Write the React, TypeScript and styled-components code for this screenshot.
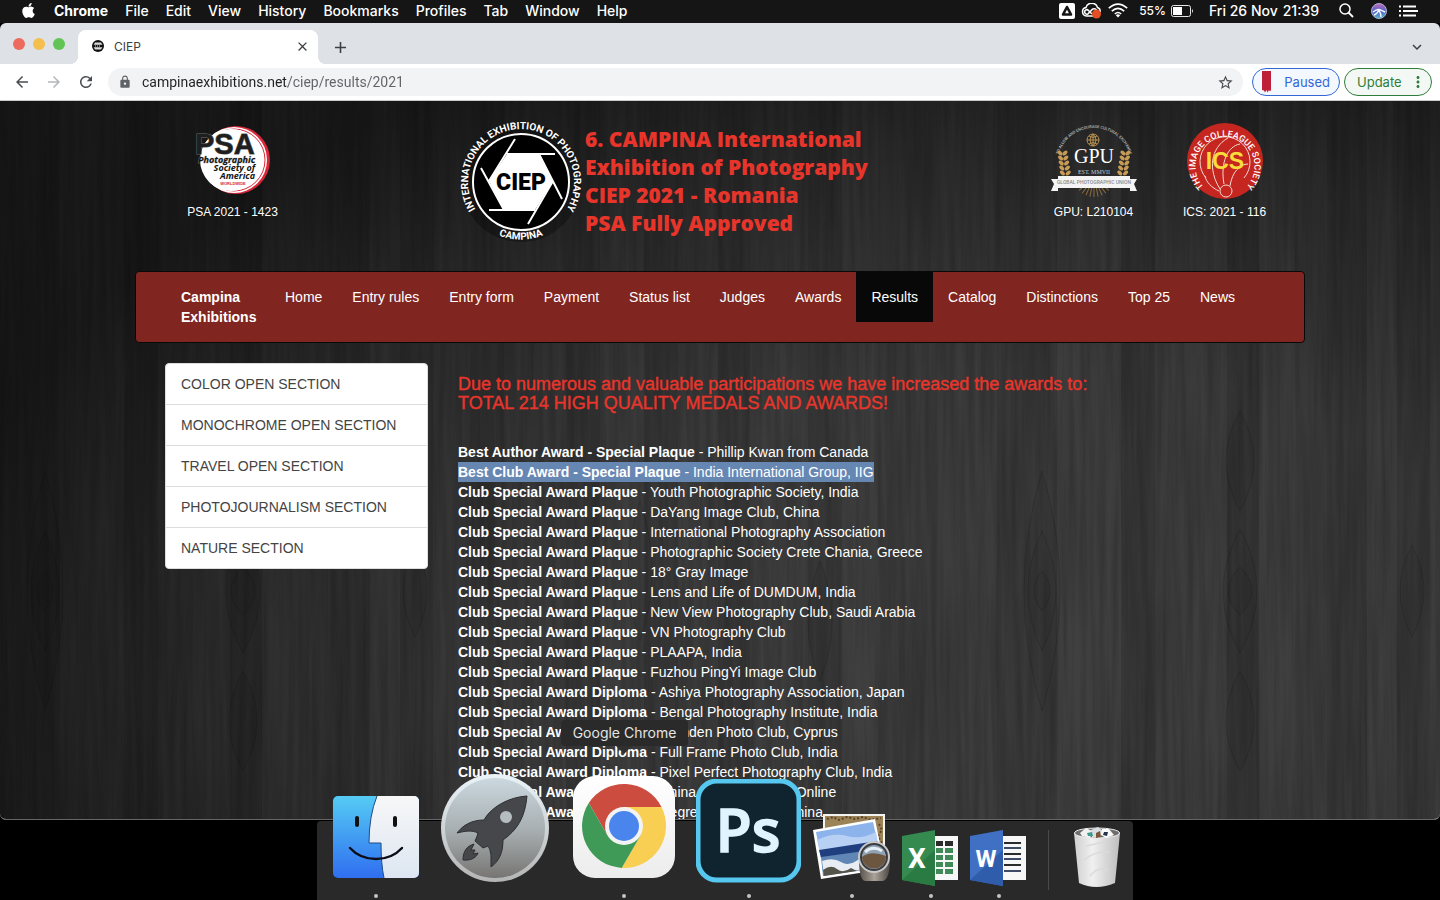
import React from "react";
import styled, { createGlobalStyle } from "styled-components";
import { FaApple } from "react-icons/fa";
import {
  MdArrowBack,
  MdArrowForward,
  MdRefresh,
  MdLock,
  MdStarBorder,
  MdMoreVert,
  MdClose,
  MdAdd,
  MdExpandMore,
} from "react-icons/md";

const GlobalStyle = createGlobalStyle`
  * { box-sizing: border-box; }
  body { margin: 0; background: #000; }
  button, input { font: inherit; }
`;

const uiFont = `Inter, Roboto, sans-serif`;
const siteFont = `"Helvetica Neue", "Liberation Sans", Arial, sans-serif`;
const badgeFont = `Roboto, "Liberation Sans", sans-serif`;

/* ---------- desktop and menu bar ---------- */

const Desktop = styled.div`
  position: relative;
  display: flex;
  flex-direction: column;
  height: 100vh;
  padding-bottom: 80px;
  overflow: hidden;
  background: #000;
  font-family: ${uiFont};
`;

const MenuBar = styled.header`
  display: flex;
  justify-content: space-between;
  align-items: center;
  flex: none;
  height: 23px;
  padding: 0 22px 2px 20px;
  background: #151515;
  color: #fff;
`;

const Menus = styled.nav`
  display: flex;
  align-items: center;
  gap: 17px;
`;

const MenuButton = styled.button<{ $bold?: boolean }>`
  display: flex;
  padding: 0;
  border: 0;
  background: none;
  color: #fff;
  font-size: 14px;
  line-height: 22px;
  font-weight: ${(p) => (p.$bold ? 700 : 500)};
  white-space: nowrap;
`;

const StatusArea = styled.div`
  display: flex;
  align-items: center;
`;

const StatusButton = styled(MenuButton)<{ $gap: number; $small?: boolean }>`
  align-items: center;
  gap: 5px;
  margin-left: ${(p) => p.$gap}px;
  font-size: ${(p) => (p.$small ? 12 : 14)}px;
`;

/* ---------- browser window ---------- */

const BrowserWindow = styled.main`
  display: flex;
  flex-direction: column;
  flex: 1;
  min-height: 0;
  overflow: hidden;
  border-bottom: 1px solid #666;
  border-radius: 6px;
  background: #dee1e6;
`;

const TabStrip = styled.div`
  display: flex;
  align-items: flex-end;
  flex: none;
  height: 41px;
  padding: 0 14px 0 13px;
`;

const WindowControls = styled.div`
  display: flex;
  gap: 8px;
  align-self: center;
  margin-right: 13px;
`;

const Light = styled.button<{ $color: string }>`
  width: 12px;
  height: 12px;
  padding: 0;
  border: 0;
  border-radius: 50%;
  background: ${(p) => p.$color};
`;

const Tab = styled.div`
  position: relative;
  display: flex;
  align-items: center;
  width: 240px;
  height: 34px;
  padding: 0 8px 2px 13px;
  border-radius: 8px 8px 0 0;
  background: #fff;
  color: #3c4043;
  font-size: 12px;

  &::before,
  &::after {
    content: "";
    position: absolute;
    bottom: 0;
    width: 8px;
    height: 8px;
  }
  &::before {
    left: -8px;
    background: radial-gradient(circle at 0 0, transparent 8px, #fff 8px);
  }
  &::after {
    right: -8px;
    background: radial-gradient(circle at 100% 0, transparent 8px, #fff 8px);
  }
`;

const TabTitle = styled.span`
  flex: 1;
  margin-left: 9px;
`;

const IconButton = styled.button<{ $tone?: string }>`
  display: flex;
  align-items: center;
  justify-content: center;
  padding: 0;
  border: 0;
  background: none;
  color: ${(p) => p.$tone || "#3c4043"};
`;

const NewTab = styled(IconButton)`
  height: 34px;
  margin-left: 13px;
`;

const TabSearch = styled(IconButton)`
  height: 34px;
  margin-left: auto;
`;

const Toolbar = styled.div`
  display: flex;
  align-items: center;
  flex: none;
  height: 37px;
  padding: 0 8px 0 13px;
  border-bottom: 1px solid #c9cbcd;
  background: #fff;
`;

const NavButtons = styled.div`
  display: flex;
  gap: 14px;
  margin-right: 13px;
`;

const Omnibox = styled.div`
  display: flex;
  align-items: center;
  flex: 1;
  height: 28px;
  margin-right: 9px;
  padding: 0 9px 0 10px;
  border-radius: 14px;
  background: #f1f3f4;
  color: #5f6368;
`;

const Address = styled.input`
  flex: 1;
  min-width: 0;
  margin-left: 10px;
  padding: 0;
  border: 0;
  outline: 0;
  color: #202124;
  font-family: Roboto, sans-serif;
  font-size: 14px;
  line-height: 20px;
  background: linear-gradient(90deg, #202124 146px, #5f6368 146px);
  background-clip: text;
  -webkit-background-clip: text;
  -webkit-text-fill-color: transparent;
`;

const Pill = styled.button<{ $color: string; $fill: string }>`
  display: flex;
  align-items: center;
  justify-content: space-between;
  width: 88px;
  height: 28px;
  margin-right: 4px;
  padding: 0 9px;
  border: 1px solid ${(p) => p.$color};
  border-radius: 14px;
  background: ${(p) => p.$fill};
  color: ${(p) => p.$color};
  font-size: 13px;
  &:last-child {
    margin-right: 0;
    padding: 0 4px 0 12px;
  }
`;

/* ---------- web page ---------- */

const Page = styled.div`
  position: relative;
  flex: 1;
  min-height: 0;
  overflow: hidden;
  background: radial-gradient(ellipse 77% 96% at 72% 80%, #404040 0%, #3d3d3d 45%, #2c2c2c 75%, #1a1a1a 100%);
  color: #fff;
  font-family: ${siteFont};
  font-size: 14px;
  line-height: 20px;
`;

const WoodLayer = styled.svg`
  position: absolute;
  inset: 0;
  width: 100%;
  height: 100%;
`;

const Container = styled.div`
  position: relative;
  max-width: 1170px;
  margin: 0 auto;
`;

const Banner = styled.div`
  display: grid;
  grid-template-columns: 195px 1fr 131px 131px;
  height: 170px;
  padding: 20px 15px 0 0;
`;

const Sponsor = styled.figure`
  display: flex;
  flex-direction: column;
  align-items: center;
  margin: 0;
  font-size: 12px;
  svg {
    overflow: visible;
  }
`;

const SponsorCaption = styled.figcaption`
  white-space: nowrap;
`;

const TitleBlock = styled.div`
  display: flex;
  padding-left: 131px;
  svg {
    flex: none;
    overflow: visible;
  }
`;

const SiteTitle = styled.h1`
  margin: 4px 0 0 4px;
  color: #e8352b;
  font-family: "Open Sans", sans-serif;
  font-weight: 800;
  font-size: 21px;
  line-height: 28px;
  white-space: nowrap;
`;

const SiteNav = styled.nav`
  display: flex;
  align-items: flex-start;
  min-height: 72px;
  padding: 0 30px;
  border: 1px solid #090909;
  border-radius: 4px;
  background: #802520;
`;

const Brand = styled.a`
  width: 104px;
  padding: 15px 15px 0;
  color: #fff;
  font-weight: 700;
  text-decoration: none;
`;

const NavItem = styled.a<{ $active?: boolean }>`
  padding: 15px;
  background: ${(p) => (p.$active ? "#080808" : "none")};
  color: #fff;
  text-decoration: none;
  white-space: nowrap;
`;

const Columns = styled.div`
  display: flex;
  align-items: flex-start;
  gap: 30px;
  padding: 20px 30px 0;
`;

const SectionList = styled.nav`
  flex: none;
  width: 263px;
  overflow: hidden;
  border: 1px solid #ddd;
  border-radius: 4px;
  background: #fff;
`;

const SectionLink = styled.a`
  display: block;
  padding: 10px 15px;
  color: #444;
  text-decoration: none;
  & + & {
    border-top: 1px solid #ddd;
  }
`;

const Results = styled.section`
  flex: 1;
  white-space: nowrap;
`;

const Notice = styled.h2`
  margin: 12px 0 29px;
  color: #e8352b;
  font-size: 18px;
  font-weight: 400;
  line-height: 19px;
  -webkit-text-stroke: 0.4px #e8352b;
`;

const AwardList = styled.ul`
  margin: 0;
  padding: 0;
  list-style: none;
`;

const AwardText = styled.span<{ $selected?: boolean }>`
  display: inline-block;
  background: ${(p) => (p.$selected ? "#6787b3" : "none")};
`;

/* ---------- dock ---------- */

const DockLayer = styled.div`
  position: absolute;
  left: 0;
  right: 0;
  bottom: 0;
  display: flex;
  justify-content: center;
  padding-left: 10px;
`;

const Dock = styled.nav`
  display: flex;
  align-items: flex-end;
  height: 79px;
  border-radius: 4px 4px 0 0;
  background: #292929;
`;

const DockItem = styled.button<{ $width: number }>`
  position: relative;
  display: flex;
  flex-direction: column;
  align-items: center;
  flex: none;
  gap: 4px;
  width: ${(p) => p.$width}px;
  padding: 0 0 2px;
  border: 0;
  background: none;
  svg {
    display: block;
  }
`;

const RunningDot = styled.span<{ $on: boolean }>`
  width: 4px;
  height: 4px;
  border-radius: 50%;
  background: ${(p) => (p.$on ? "#c4c4c4" : "transparent")};
`;

const Divider = styled.span`
  width: 1px;
  height: 60px;
  margin: 0 12px 10px 13px;
  background: #4a4a4a;
`;

const DockLabel = styled.span`
  position: absolute;
  left: 6px;
  bottom: 154px;
  width: 127px;
  border-radius: 4px;
  background: #2a2a2a;
  color: #e4e4e4;
  font-family: ${uiFont};
  font-size: 14px;
  line-height: 26px;
  text-align: center;
  white-space: nowrap;
  &::after {
    content: "";
    position: absolute;
    top: 26px;
    left: 55px;
    border: 8px solid transparent;
    border-top-color: #303030;
    border-bottom: 0;
  }
`;

/* ---------- drawings ---------- */

const PLANKS = [
  [0, 60, 0.1], [60, 64, 0], [124, 34, 0.14], [158, 38, 0.04], [196, 34, 0.02], [230, 32, 0.16],
  [262, 36, 0], [298, 32, 0.05], [330, 40, 0.12], [370, 30, 0], [400, 33, 0.12], [433, 37, 0.02],
  [470, 34, 0.1], [504, 62, 0.04], [566, 34, 0.12], [600, 44, 0], [644, 34, 0.1], [678, 40, 0.03],
  [718, 32, 0.12], [750, 58, 0.02], [808, 34, 0.1], [842, 36, 0], [878, 59, 0.06], [937, 60, 0.03],
];

const KNOTS = [
  [45, 490, 8, 20], [45, 490, 14, 60], [45, 490, 18, 120],
  [243, 490, 12, 24], [243, 490, 17, 62], [243, 360, 14, 50], [243, 620, 14, 50],
  [415, 490, 12, 46], [640, 470, 12, 70], [820, 520, 12, 60],
];

const Wood = () => (
  <WoodLayer aria-hidden="true">
    <defs>
      <filter id="grain" x="0" y="0" width="100%" height="100%">
        <feTurbulence type="fractalNoise" baseFrequency="0.16 0.006" numOctaves="3" seed="7" />
        <feColorMatrix values="0 0 0 0 0  0 0 0 0 0  0 0 0 0 0  0.45 0 0 0 -0.13" />
      </filter>
      <pattern id="planks" width="997" height="1000" patternUnits="userSpaceOnUse">
        {PLANKS.map(([x, w, o]) => (
          <rect key={x} x={x} width={w} height="1000" fill="#000" opacity={o} />
        ))}
        {KNOTS.map(([x, y, rx, ry], i) => (
          <path
            key={i}
            d={`M${x} ${y - ry}Q${x + rx * 2} ${y} ${x} ${y + ry}Q${x - rx * 2} ${y} ${x} ${y - ry}Z`}
            fill="#000"
            fillOpacity="0.04"
            stroke="#000"
            strokeOpacity="0.14"
          />
        ))}
      </pattern>
    </defs>
    <rect width="100%" height="100%" fill="url(#planks)" />
    <rect width="100%" height="100%" filter="url(#grain)" opacity="0.7" />
  </WoodLayer>
);

const PsaLogo = () => (
  <svg width="78" height="81" viewBox="0 -4 78 81">
    <circle cx="42" cy="35" r="34" fill="#d8283a" />
    <circle cx="40" cy="35" r="33" fill="#fff" />
    <circle cx="40" cy="35" r="31" fill="none" stroke="#d8283a" strokeWidth="1" />
    <circle cx="37" cy="35" r="31" fill="#fff" />
    <text x="1" y="29" fontFamily={siteFont} fontWeight="700" fontSize="29" fill="#1f1f1f" stroke="#6a6a6a" strokeWidth="1" paintOrder="stroke">PSA</text>
    <g fontFamily="Open Sans, sans-serif" fontWeight="700" fontStyle="italic" fontSize="9" fill="#151515" textAnchor="end">
      <text x="61" y="38" stroke="#aaa" strokeWidth="0.6" paintOrder="stroke">Photographic</text>
      <text x="61" y="46">Society of</text>
      <text x="61" y="54">America</text>
    </g>
    <text x="39" y="60" fontFamily={siteFont} fontWeight="700" fontSize="4" fill="#d8283a" textAnchor="middle">WORLDWIDE</text>
  </svg>
);

const CiepLogo = () => (
  <svg width="120" height="122" viewBox="0 0 120 122">
    <defs>
      <path id="ciepTop" d="M 22.5 98.5 A 53 53 0 1 1 97.5 98.5" />
      <path id="ciepBottom" d="M 20 103 A 59 59 0 0 0 100 103" />
    </defs>
    <circle cx="60" cy="61" r="60" fill="#000" opacity="0.3" />
    <circle cx="60" cy="61" r="48" fill="#000" stroke="#fff" strokeWidth="2" />
    <path d="M46 33H78L92 60L74 89H43L28 60Z" fill="#fff" />
    <path d="M28 60L54 18M46 33H94M78 33L101 78M92 60L67 103M74 89H28M43 89L20 47" stroke="#fff" strokeWidth="2" />
    <text x="60" y="69" fontFamily={badgeFont} fontWeight="900" fontSize="23" textAnchor="middle" fill="#000">CIEP</text>
    <g fontFamily={badgeFont} fontWeight="700" fontSize="10" fill="#fff" textAnchor="middle">
      <text>
        <textPath href="#ciepTop" startOffset="50%">INTERNATIONAL EXHIBITION OF PHOTOGRAPHY</textPath>
      </text>
      <text>
        <textPath href="#ciepBottom" startOffset="50%">CAMPINA</textPath>
      </text>
    </g>
  </svg>
);

const EARS = [0, 1, 2, 3, 4];
const RAYS = [-60, -48, -36, -24, -12, 0, 12, 24, 36, 48, 60];

const GpuLogo = () => (
  <svg width="86" height="81" viewBox="0 -2 86 81">
    <defs>
      <path id="gpuArc" d="M 6 42 A 37 37 0 0 1 80 42" />
    </defs>
    <text fontFamily={badgeFont} fontSize="4" fontWeight="500" fill="#bbb" textAnchor="middle">
      <textPath href="#gpuArc" startOffset="50%">TO ALLOW AND ENCOURAGE CULTURAL EXCHANGE</textPath>
    </text>
    <g fill="none" stroke="#b8924f" strokeWidth="1">
      <circle cx="42" cy="17" r="6" />
      <path d="M36 17H48M42 11V23M38 13Q42 16 46 13M38 21Q42 18 46 21M42 11Q36 17 42 23Q48 17 42 11" />
    </g>
    <text x="43" y="40" fontFamily="Liberation Serif, serif" fontSize="20" fill="#fff" textAnchor="middle">GPU</text>
    <text x="43" y="51" fontFamily="Liberation Serif, serif" fontSize="6" fill="#c8c8c8" textAnchor="middle">EST. MMVII</text>
    {EARS.map((i) => (
      <g key={i} fill="#c79a55">
        <ellipse cx={9 + i * 0.6} cy={30 + i * 5} rx="3" ry="1.8" transform={`rotate(40 ${9 + i * 0.6} ${30 + i * 5})`} />
        <ellipse cx={14 + i * 0.8} cy={30 + i * 5} rx="3" ry="1.8" transform={`rotate(-40 ${14 + i * 0.8} ${30 + i * 5})`} />
        <ellipse cx={77 - i * 0.6} cy={30 + i * 5} rx="3" ry="1.8" transform={`rotate(-40 ${77 - i * 0.6} ${30 + i * 5})`} />
        <ellipse cx={72 - i * 0.8} cy={30 + i * 5} rx="3" ry="1.8" transform={`rotate(40 ${72 - i * 0.8} ${30 + i * 5})`} />
      </g>
    ))}
    {RAYS.map((a) => (
      <path key={a} d="M43 64V74" stroke="#8b6d3c" strokeWidth="1" transform={`rotate(${a} 43 54)`} />
    ))}
    <path d="M0 56H7V53H79V56H86L83 61L86 68H79V65H7V68H0L3 61Z" fill="#f4f4f4" />
    <text x="43" y="61" fontFamily={badgeFont} fontSize="5" fontWeight="500" fill="#8a8a8a" textAnchor="middle">GLOBAL PHOTOGRAPHIC UNION</text>
  </svg>
);

const IcsLogo = () => (
  <svg width="78" height="81" viewBox="0 -1 78 81">
    <defs>
      <path id="icsArc" d="M 17.5 64.5 A 29.5 29.5 0 1 1 60.5 64.5" />
    </defs>
    <circle cx="39" cy="39" r="38" fill="#c5261f" />
    <g fill="none" stroke="#f6d9d4" strokeWidth="1">
      <path d="M20 56A25 25 0 1 1 58 56" />
      <path d="M34 67C22 48 24 26 42 16M38 62C34 40 42 24 54 22M44 64C46 50 54 42 62 42M33 69C26 66 20 60 19 54" />
      <circle cx="40" cy="69" r="6" />
    </g>
    <text fontFamily={badgeFont} fontSize="9" fontWeight="500" fill="#fff" textAnchor="middle">
      <textPath href="#icsArc" startOffset="50%">THE IMAGE COLLEAGUE SOCIETY</textPath>
    </text>
    <text x="39" y="47" fontFamily={siteFont} fontSize="23" fontWeight="700" fill="#f8dc3c" textAnchor="middle">ICS</text>
  </svg>
);

const FinderIcon = () => (
  <svg width="86" height="94" viewBox="0 0 86 94">
    <defs>
      <linearGradient id="finderBlue" x1="0" y1="0" x2="0" y2="1">
        <stop offset="0" stopColor="#55cbf4" />
        <stop offset="1" stopColor="#2f6ef0" />
      </linearGradient>
      <linearGradient id="finderWhite" x1="0" y1="0" x2="0" y2="1">
        <stop offset="0" stopColor="#f7f7f8" />
        <stop offset="1" stopColor="#dde6f1" />
      </linearGradient>
    </defs>
    <rect width="86" height="82" rx="5" fill="url(#finderBlue)" />
    <path d="M44 0H81A5 5 0 0 1 86 5V77A5 5 0 0 1 81 82H51Q48 68 48 47H36Q36 20 44 0Z" fill="url(#finderWhite)" />
    <path d="M44 0Q36 20 36 47H48Q48 68 51 82" fill="none" stroke="#1f4d86" strokeWidth="1" />
    <path d="M24 22V29M62 22V29" stroke="#111" strokeWidth="4" strokeLinecap="round" />
    <path d="M17 52Q27 63 43 63T69 52" fill="none" stroke="#0c0c14" strokeWidth="2.4" strokeLinecap="round" />
  </svg>
);

const LaunchpadIcon = () => (
  <svg width="108" height="116" viewBox="0 0 108 116">
    <defs>
      <linearGradient id="padRim" x1="0" y1="0" x2="0" y2="1">
        <stop offset="0" stopColor="#eaf4f8" />
        <stop offset="1" stopColor="#b4b4b4" />
      </linearGradient>
      <linearGradient id="padFace" x1="0" y1="0" x2="0" y2="1">
        <stop offset="0" stopColor="#cbd8df" />
        <stop offset="0.55" stopColor="#a5acae" />
        <stop offset="1" stopColor="#777573" />
      </linearGradient>
    </defs>
    <circle cx="54" cy="54" r="54" fill="url(#padRim)" />
    <circle cx="54" cy="54" r="50" fill="url(#padFace)" />
    <g fill="#45474a" stroke="#2d2f31" strokeWidth="1">
      <path d="M86 22C68 23 50 33 43 46C31 46 22 51 16 59C24 57 31 56 37 59Q36 63 34 67L42 74L47 72Q49 74 50 81L50 93C58 87 62 79 62 66C76 56 84 44 86 22Z" />
      <path d="M33 70C26 72 22 77 22 86C30 87 36 83 37 79L32 80L34 76L30 76Z" />
    </g>
    <circle cx="65" cy="43" r="6" fill="#b6bdc0" />
  </svg>
);

const ChromeIcon = () => (
  <svg width="102" height="114" viewBox="0 0 102 114">
    <defs>
      <linearGradient id="chromeTile" x1="0" y1="0" x2="0" y2="1">
        <stop offset="0" stopColor="#fff" />
        <stop offset="1" stopColor="#ececec" />
      </linearGradient>
    </defs>
    <rect width="102" height="102" rx="22" fill="url(#chromeTile)" />
    <path d="M15.8 27.1A42 42 0 0 1 88.5 31H51L34.5 59.5Z" fill="#cc4d40" />
    <path d="M88.5 31A42 42 0 0 1 48.7 91.9L67.5 59.5L51 31Z" fill="#f8cf52" />
    <path d="M48.7 91.9A42 42 0 0 1 15.8 27.1L34.5 59.5L67.5 59.5Z" fill="#3f9a57" />
    <circle cx="51" cy="50" r="19" fill="#f3f3f3" />
    <circle cx="51" cy="50" r="15" fill="#4a85ee" />
  </svg>
);

const PhotoshopIcon = () => (
  <svg width="105" height="111" viewBox="0 0 105 111">
    <rect x="2" y="2" width="101" height="99" rx="19" fill="#10242f" stroke="#56c8ef" strokeWidth="5" />
    <text x="52" y="73" fontFamily="Open Sans, sans-serif" fontWeight="600" fontSize="59" fill="#dff4ff" stroke="#dff4ff" strokeWidth="1.5" textAnchor="middle">Ps</text>
  </svg>
);

const PreviewIcon = () => (
  <svg width="77" height="76" viewBox="0 0 77 76">
    <defs>
      <linearGradient id="loupe" x1="0" y1="0" x2="1" y2="0">
        <stop offset="0" stopColor="#55504a" />
        <stop offset="0.5" stopColor="#aaa299" />
        <stop offset="1" stopColor="#4a4642" />
      </linearGradient>
    </defs>
    <rect x="10" y="0" width="62" height="54" fill="#f4f2ee" />
    <rect x="12" y="2" width="58" height="50" fill="#9c8257" />
    <path d="M14 5L20 3L26 6L34 3L42 5L50 3L58 6L68 4M66 10L69 16L65 22L69 30L66 38" stroke="#5b4526" strokeWidth="2" strokeDasharray="2 2" fill="none" />
    <path d="M0 16L62 5L72 55L8 65Z" fill="#fff" />
    <path d="M3 18L60 8L65 30L7 39Z" fill="#8db3ec" />
    <path d="M4 26Q20 18 34 22T63 18L65 29L7 38Z" fill="#b8d0f3" />
    <path d="M6 36L64 27L66 36L8 44Z" fill="#1f3f7e" />
    <path d="M8 43L66 35L69 53L10 62Z" fill="#5f86b5" />
    <path d="M9 47Q20 43 28 48T46 45L52 55L11 61Z" fill="#e7edf2" />
    <path d="M10 56Q18 50 24 55T38 54L44 57L11 62Z" fill="#55544a" />
    <path d="M46 44Q46 66 52 67H70Q77 65 77 44Z" fill="url(#loupe)" />
    <circle cx="61" cy="43" r="15" fill="#3a3c40" stroke="#c9c9c9" strokeWidth="2" />
    <circle cx="61" cy="43" r="12" fill="#8fa3b4" />
    <path d="M49 43Q58 36 73 42A12 12 0 0 1 49 43Z" fill="#6d5640" />
    <path d="M52 38Q60 31 69 37" stroke="#e6eef5" strokeWidth="3" fill="none" />
  </svg>
);

const SHEET_ROWS = [11, 18, 25, 32, 39];

const ExcelIcon = () => (
  <svg width="57" height="60" viewBox="0 0 57 60">
    <rect x="30" y="6" width="26" height="44" fill="#f7f7f7" />
    {SHEET_ROWS.map((y, i) => (
      <path key={y} d={`M34 ${y + 2.5}H41M43 ${y + 2.5}H51`} stroke={i === 0 ? "#2b2b2b" : "#3f8a58"} strokeWidth="5" />
    ))}
    <path d="M0 6L33 0V56L0 50Z" fill="#358a4f" />
    <path d="M0 50L33 20V56Z" fill="#2a7a43" />
    <text x="15" y="38" fontFamily={badgeFont} fontWeight="700" fontSize="28" fill="#fff" textAnchor="middle">X</text>
  </svg>
);

const WORD_ROWS = [12, 17, 23, 28, 34, 40];

const WordIcon = () => (
  <svg width="57" height="60" viewBox="0 0 57 60">
    <rect x="30" y="6" width="26" height="44" fill="#f7f7f7" />
    {WORD_ROWS.map((y, i) => (
      <path key={y} d={`M34 ${y + 1}H51`} stroke={i % 2 ? "#3d4a68" : "#2b2b2b"} strokeWidth="2" />
    ))}
    <path d="M0 6L33 0V56L0 50Z" fill="#3f70c4" />
    <path d="M0 50L33 20V56Z" fill="#2f5cab" />
    <text x="16" y="37" fontFamily={badgeFont} fontWeight="700" fontSize="24" fill="#fff" textAnchor="middle">W</text>
  </svg>
);

const TrashIcon = () => (
  <svg width="46" height="64" viewBox="0 0 46 64">
    <defs>
      <linearGradient id="bin" x1="0" y1="0" x2="1" y2="0">
        <stop offset="0" stopColor="#cfcfcf" />
        <stop offset="0.4" stopColor="#f0f0f0" />
        <stop offset="1" stopColor="#bdbdbd" />
      </linearGradient>
    </defs>
    <path d="M0 7L5 57Q22 65 41 57L46 7Z" fill="url(#bin)" />
    <ellipse cx="23" cy="7" rx="22.5" ry="5" fill="#6d6d6d" stroke="#eee" strokeWidth="1" />
    <path d="M6 7L12 2L18 5L16 12L8 10Z" fill="#f1f1f1" />
    <path d="M17 4L24 1L30 6L25 12L18 11Z" fill="#d9dee3" />
    <path d="M28 3L35 3L40 9L32 12L27 9Z" fill="#fafafa" />
    <path d="M13 7L18 6L19 10L14 10Z" fill="#3f9a8c" />
    <path d="M22 7L26 5L27 11L22 12Z" fill="#7c5638" />
    <path d="M30 6L34 6L33 10L29 9Z" fill="#27324d" />
    <path d="M12 20L30 16M10 34Q22 24 36 26M16 50Q24 40 34 44" stroke="#dadada" strokeWidth="1.5" fill="none" />
  </svg>
);

const Favicon = () => (
  <svg width="14" height="14" viewBox="0 0 14 14">
    <circle cx="7" cy="7" r="6" fill="#111" />
    <path d="M4 3.5H10L12 7L10 10.5H4L2 7Z" fill="#ddd" />
    <path d="M2 7H12" stroke="#111" strokeWidth="2.5" />
    <path d="M4 7H10" stroke="#ddd" strokeWidth="1" strokeDasharray="1 1" />
  </svg>
);

const UploadBadge = () => (
  <svg width="16" height="16" viewBox="0 0 16 16">
    <rect width="16" height="16" rx="2" fill="#fff" />
    <path d="M8 4L12 11.5H4Z" fill="none" stroke="#151515" strokeWidth="2.6" strokeLinejoin="round" />
  </svg>
);

const CloudBadge = () => (
  <svg width="21" height="16" viewBox="0 0 21 16">
    <g fill="none" stroke="#fff" strokeWidth="1.5">
      <path d="M12 13H5.5A4.3 4.3 0 0 1 5 4.5A6 6 0 0 1 16.5 4.5A4 4 0 0 1 19 9" />
      <path d="M11 11L7.5 7.5A2.2 2.2 0 1 0 7 10.8L11.5 6.2A3 3 0 0 1 16 8" />
    </g>
    <circle cx="15.5" cy="11" r="4.5" fill="#e24f22" />
  </svg>
);

const WifiGlyph = () => (
  <svg width="20" height="15" viewBox="0 0 20 15">
    <g fill="none" stroke="#fff" strokeWidth="1.6">
      <path d="M0.8 5.2Q10 -3 19.2 5.2" />
      <path d="M3.8 8.2Q10 2.6 16.2 8.2" />
      <path d="M6.8 11Q10 8 13.2 11" />
    </g>
    <path d="M10 14.5L7.8 12.2Q10 10.5 12.2 12.2Z" fill="#fff" />
  </svg>
);

const BatteryGlyph = () => (
  <svg width="23" height="12" viewBox="0 0 23 12">
    <rect x="0.5" y="0.5" width="19" height="11" rx="2" fill="none" stroke="#e6e6e6" />
    <rect x="2" y="2" width="9" height="8" fill="#fff" />
    <path d="M21 4Q23 6 21 8Z" fill="#e6e6e6" />
  </svg>
);

const SearchGlyph = () => (
  <svg width="15" height="15" viewBox="0 0 15 15">
    <circle cx="6" cy="6" r="5" fill="none" stroke="#fff" strokeWidth="1.5" />
    <path d="M9.5 9.5L14 14" stroke="#fff" strokeWidth="1.8" />
  </svg>
);

const AssistantGlyph = () => (
  <svg width="16" height="16" viewBox="0 0 16 16">
    <defs>
      <linearGradient id="orb" x1="0" y1="0" x2="0" y2="1">
        <stop offset="0" stopColor="#c46ab8" />
        <stop offset="0.5" stopColor="#5661c9" />
        <stop offset="1" stopColor="#4fb3c9" />
      </linearGradient>
    </defs>
    <circle cx="8" cy="8" r="7.5" fill="url(#orb)" stroke="#aab3d8" />
    <path d="M2 9Q6 6 8 6.5T14 9M8 7Q6 11 3 12M8 7Q10 11 10 14" fill="none" stroke="#f2f6ff" strokeWidth="1.5" />
  </svg>
);

const ListGlyph = () => (
  <svg width="19" height="12" viewBox="0 0 19 12">
    <path d="M0 1.5H2M0 6H2M0 10.5H2M4 1.5H17M4 6H19M4 10.5H17" stroke="#fff" strokeWidth="2" />
  </svg>
);

const ProfileFlag = () => (
  <svg width="9" height="22" viewBox="0 0 9 22">
    <path d="M0 0H9V19L8 20.5L7 19L5.5 21.5L4.5 19L3 21.5L2 19.5L0 19Z" fill="#bf1e38" />
  </svg>
);

/* ---------- content ---------- */

const MENUS = ["File", "Edit", "View", "History", "Bookmarks", "Profiles", "Tab", "Window", "Help"];

const NAV = [
  "Home", "Entry rules", "Entry form", "Payment", "Status list", "Judges",
  "Awards", "Results", "Catalog", "Distinctions", "Top 25", "News",
];

const SECTIONS = [
  "COLOR OPEN SECTION",
  "MONOCHROME OPEN SECTION",
  "TRAVEL OPEN SECTION",
  "PHOTOJOURNALISM SECTION",
  "NATURE SECTION",
];

const PLAQUE = "Club Special Award Plaque";
const DIPLOMA = "Club Special Award Diploma";

const AWARDS: [string, string][] = [
  ["Best Author Award - Special Plaque", "Phillip Kwan from Canada"],
  ["Best Club Award - Special Plaque", "India International Group, IIG"],
  [PLAQUE, "Youth Photographic Society, India"],
  [PLAQUE, "DaYang Image Club, China"],
  [PLAQUE, "International Photography Association"],
  [PLAQUE, "Photographic Society Crete Chania, Greece"],
  [PLAQUE, "18° Gray Image"],
  [PLAQUE, "Lens and Life of DUMDUM, India"],
  [PLAQUE, "New View Photography Club, Saudi Arabia"],
  [PLAQUE, "VN Photography Club"],
  [PLAQUE, "PLAAPA, India"],
  [PLAQUE, "Fuzhou PingYi Image Club"],
  [DIPLOMA, "Ashiya Photography Association, Japan"],
  [DIPLOMA, "Bengal Photography Institute, India"],
  [DIPLOMA, "Camden Photo Club, Cyprus"],
  [DIPLOMA, "Full Frame Photo Club, India"],
  [DIPLOMA, "Pixel Perfect Photography Club, India"],
  [DIPLOMA, "China Photographers Online"],
  [DIPLOMA, "Degree Photo Club, China"],
];

const SELECTED_AWARD = 1;

export default function App() {
  return (
    <>
      <GlobalStyle />
      <Desktop>
        <MenuBar>
          <Menus aria-label="Menu bar">
            <MenuButton aria-label="Apple menu"><FaApple size={17} /></MenuButton>
            <MenuButton $bold>Chrome</MenuButton>
            {MENUS.map((m) => <MenuButton key={m}>{m}</MenuButton>)}
          </Menus>
          <StatusArea>
            <StatusButton $gap={0} aria-label="Uploads"><UploadBadge /></StatusButton>
            <StatusButton $gap={6} aria-label="Creative Cloud"><CloudBadge /></StatusButton>
            <StatusButton $gap={6} aria-label="Wi-Fi"><WifiGlyph /></StatusButton>
            <StatusButton $gap={11} $small>55%<BatteryGlyph /></StatusButton>
            <StatusButton $gap={15}><span>Fri 26 Nov</span><span>21:39</span></StatusButton>
            <StatusButton $gap={20} aria-label="Search"><SearchGlyph /></StatusButton>
            <StatusButton $gap={17} aria-label="Assistant"><AssistantGlyph /></StatusButton>
            <StatusButton $gap={12} aria-label="Notifications"><ListGlyph /></StatusButton>
          </StatusArea>
        </MenuBar>

        <BrowserWindow>
          <TabStrip>
            <WindowControls>
              <Light $color="#ec6a5e" aria-label="Close window" />
              <Light $color="#f4bf4f" aria-label="Minimize window" />
              <Light $color="#61c454" aria-label="Zoom window" />
            </WindowControls>
            <Tab>
              <Favicon />
              <TabTitle>CIEP</TabTitle>
              <IconButton aria-label="Close tab"><MdClose size={15} /></IconButton>
            </Tab>
            <NewTab aria-label="New tab"><MdAdd size={19} /></NewTab>
            <TabSearch aria-label="Search tabs"><MdExpandMore size={18} /></TabSearch>
          </TabStrip>
          <Toolbar>
            <NavButtons>
              <IconButton $tone="#4a4d51" aria-label="Back"><MdArrowBack size={18} /></IconButton>
              <IconButton $tone="#b4b6b9" aria-label="Forward"><MdArrowForward size={18} /></IconButton>
              <IconButton $tone="#4a4d51" aria-label="Reload"><MdRefresh size={18} /></IconButton>
            </NavButtons>
            <Omnibox>
              <MdLock size={14} />
              <Address aria-label="Address" defaultValue="campinaexhibitions.net/ciep/results/2021" />
              <IconButton $tone="#4a4d51" aria-label="Bookmark this page"><MdStarBorder size={17} /></IconButton>
            </Omnibox>
            <Pill $color="#3367d6" $fill="#f3f7fe"><ProfileFlag />Paused</Pill>
            <Pill $color="#2f7d3b" $fill="#f3f8f4">Update<MdMoreVert size={18} /></Pill>
          </Toolbar>

          <Page>
            <Wood />
            <Container>
              <Banner>
                <Sponsor>
                  <PsaLogo />
                  <SponsorCaption>PSA 2021 - 1423</SponsorCaption>
                </Sponsor>
                <TitleBlock>
                  <CiepLogo />
                  <SiteTitle>
                    6. CAMPINA International<br />
                    Exhibition of Photography<br />
                    CIEP 2021 - Romania<br />
                    PSA Fully Approved
                  </SiteTitle>
                </TitleBlock>
                <Sponsor>
                  <GpuLogo />
                  <SponsorCaption>GPU: L210104</SponsorCaption>
                </Sponsor>
                <Sponsor>
                  <IcsLogo />
                  <SponsorCaption>ICS: 2021 - 116</SponsorCaption>
                </Sponsor>
              </Banner>

              <SiteNav aria-label="Site">
                <Brand href="#home">Campina Exhibitions</Brand>
                {NAV.map((n) => (
                  <NavItem key={n} href="#nav" $active={n === "Results"}>{n}</NavItem>
                ))}
              </SiteNav>

              <Columns>
                <SectionList aria-label="Sections">
                  {SECTIONS.map((s) => <SectionLink key={s} href="#section">{s}</SectionLink>)}
                </SectionList>
                <Results>
                  <Notice>
                    Due to numerous and valuable participations we have increased the awards to:<br />
                    TOTAL 214 HIGH QUALITY MEDALS AND AWARDS!
                  </Notice>
                  <AwardList>
                    {AWARDS.map(([award, winner], i) => (
                      <li key={winner}>
                        <AwardText $selected={i === SELECTED_AWARD}><strong>{award}</strong> - {winner}</AwardText>
                      </li>
                    ))}
                  </AwardList>
                </Results>
              </Columns>
            </Container>
          </Page>
        </BrowserWindow>

        <DockLayer>
          <Dock aria-label="Dock">
            <DockItem $width={118} aria-label="Finder"><FinderIcon /><RunningDot $on /></DockItem>
            <DockItem $width={120} aria-label="Launchpad"><LaunchpadIcon /><RunningDot $on={false} /></DockItem>
            <DockItem $width={138}>
              <DockLabel>Google Chrome</DockLabel>
              <ChromeIcon /><RunningDot $on />
            </DockItem>
            <DockItem $width={111} aria-label="Photoshop"><PhotoshopIcon /><RunningDot $on /></DockItem>
            <DockItem $width={95} aria-label="Preview"><PreviewIcon /><RunningDot $on /></DockItem>
            <DockItem $width={63} aria-label="Excel"><ExcelIcon /><RunningDot $on /></DockItem>
            <DockItem $width={73} aria-label="Word"><WordIcon /><RunningDot $on /></DockItem>
            <Divider />
            <DockItem $width={72} aria-label="Trash"><TrashIcon /><RunningDot $on={false} /></DockItem>
          </Dock>
        </DockLayer>
      </Desktop>
    </>
  );
}
